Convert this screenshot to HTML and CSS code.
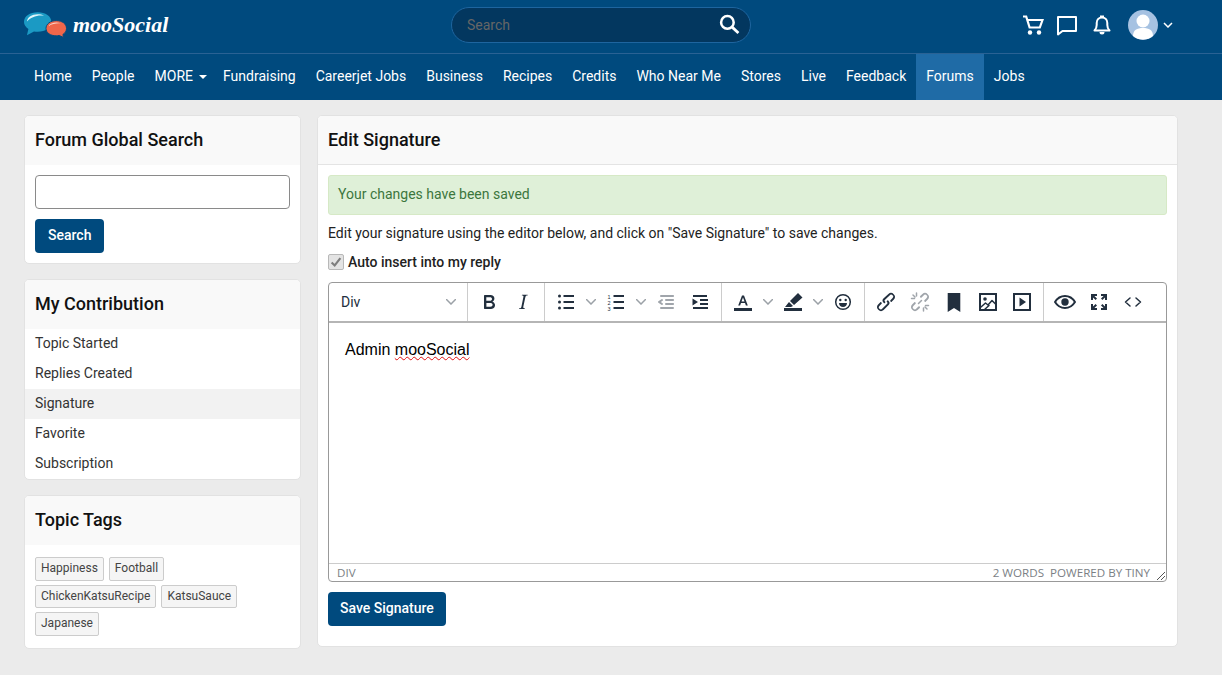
FILE: index.html
```html
<!DOCTYPE html>
<html lang="en">
<head>
    <meta charset="UTF-8">
    <meta name="viewport" content="width=device-width, initial-scale=1.0">
    <title>Edit Signature</title>
    <link rel="stylesheet" href="styles.css">
</head>
<body>
    <header class="topbar">
        <a class="logo" href="#">
            <svg class="logo-mark" viewBox="0 0 44 26">
                <path d="M14 0c8 0 14 4 14 10s-6 10-14 10c-1.300 0-2.600-.1-3.800-.4L3 23.500l1.500-6.300C1.700 15.300 0 12.800 0 10 0 4 6 0 14 0z" fill="#1b9ac4"/>
                <path d="M3 9.500C3.500 5 8 2 14 2c2.500 0 4.500.4 6.500 1.400C13 2.500 7 5 3 9.500z" fill="#dff5fb"/>
                <path d="M33 8.500c6 0 10.500 3.400 10.500 8 0 2.600-1.400 4.800-3.700 6.200l.7 3-4.500-2c-1 .3-2 .4-3 .4-6 0-10.500-3.200-10.500-7.600s4.500-8 10.500-8z" fill="#f0664a" stroke="#004a7e" stroke-width="1"/>
                <path d="M25 14c1.500-2 4.500-3.500 8-3.500 1.500 0 3 .2 4.500.8-4.500-.3-8.500.5-12.500 2.700z" fill="#fbd3c8"/>
            </svg>
            <span class="logo-text">mooSocial</span>
        </a>
        <form class="top-search">
            <span class="top-search-label">Search</span>
            <svg class="top-search-icon" viewBox="0 0 20 20"><circle cx="8" cy="8" r="6" fill="none" stroke="#fff" stroke-width="2.400"/><path d="M12.500 12.500l6 5.500" stroke="#fff" stroke-width="2.600" fill="none"/></svg>
        </form>
        <div class="top-icons">
            <svg class="top-icon" viewBox="0 0 22 22"><path d="M1 2.500h3.200l3.400 11h10.200L20.500 6H5.400" fill="none" stroke="#fff" stroke-width="2.200"/><circle cx="8" cy="18.500" r="2.200" fill="#fff"/><circle cx="17" cy="18.500" r="2.200" fill="#fff"/></svg>
            <svg class="top-icon" viewBox="0 0 22 22"><path d="M2 3h18v14H6.500L2 20.500z" fill="none" stroke="#fff" stroke-width="2" stroke-linejoin="round"/></svg>
            <svg class="top-icon bell" viewBox="0 0 22 22"><path d="M3.500 16.500c1.500-1.500 2.200-3 2.200-5.500V9c0-3.200 2.300-5.500 5.300-5.500s5.300 2.300 5.300 5.500v2c0 2.500.7 4 2.200 5.500z" fill="none" stroke="#fff" stroke-width="2" stroke-linejoin="round"/><path d="M9 1.500h4v2H9zM8.500 18h5a2.500 2.500 0 0 1-5 0z" fill="#fff"/></svg>
            <span class="avatar">
                <svg viewBox="0 0 30 30"><circle cx="15" cy="15" r="15" fill="#a6c2e2"/><circle cx="15" cy="11" r="6.500" fill="#fff"/><path d="M5 26c0-6 4-8 10-8s10 2 10 8c-3 2.500-6 3.500-10 3.500S8 28.500 5 26z" fill="#fff"/></svg>
            </span>
            <svg class="avatar-caret" viewBox="0 0 10 6"><path d="M1 1l4 4 4-4" fill="none" stroke="#fff" stroke-width="1.500"/></svg>
        </div>
    </header>

    <nav class="mainnav">
        <a href="#">Home</a>
        <a href="#">People</a>
        <a href="#" class="has-caret">MORE<span class="caret"></span></a>
        <a href="#">Fundraising</a>
        <a href="#">Careerjet Jobs</a>
        <a href="#">Business</a>
        <a href="#">Recipes</a>
        <a href="#">Credits</a>
        <a href="#">Who Near Me</a>
        <a href="#">Stores</a>
        <a href="#">Live</a>
        <a href="#">Feedback</a>
        <a href="#" class="active">Forums</a>
        <a href="#">Jobs</a>
    </nav>

    <div class="page">
        <aside class="sidebar">
            <section class="card">
                <h2 class="card-title">Forum Global Search</h2>
                <div class="search-body">
                    <input class="text-input" type="text">
                    <button class="btn" type="button">Search</button>
                </div>
            </section>
            <section class="card">
                <h2 class="card-title">My Contribution</h2>
                <ul class="side-menu">
                    <li>Topic Started</li>
                    <li>Replies Created</li>
                    <li class="current">Signature</li>
                    <li>Favorite</li>
                    <li>Subscription</li>
                </ul>
            </section>
            <section class="card">
                <h2 class="card-title">Topic Tags</h2>
                <div class="tags">
                    <a class="tag" href="#">Happiness</a>
                    <a class="tag" href="#">Football</a>
                    <a class="tag" href="#">ChickenKatsuRecipe</a>
                    <a class="tag" href="#">KatsuSauce</a>
                    <a class="tag" href="#">Japanese</a>
                </div>
            </section>
        </aside>

        <main class="card main-card">
            <h1 class="card-title bordered">Edit Signature</h1>
            <div class="main-body">
                <div class="alert">Your changes have been saved</div>
                <p class="hint">Edit your signature using the editor below, and click on "Save Signature" to save changes.</p>
                <label class="auto-insert">
                    <span class="check-box"><svg viewBox="0 0 16 16"><path d="M3 8.500l3.500 3.500L13 3.500" fill="none" stroke="#7d7d7d" stroke-width="2.400"/></svg></span>
                    Auto insert into my reply
                </label>

                <div class="editor">
                    <div class="toolbar">
                        <div class="tb-group tb-select">
                            <span>Div</span>
                            <svg class="chev" viewBox="0 0 10 6"><path d="M0 0l5 5 5-5" /></svg>
                        </div>
                        <div class="tb-group">
                            <button class="tb-btn" type="button"><svg viewBox="0 0 24 24"><path d="M7.800 19c-.3 0-.5 0-.6-.2l-.2-.5V5.700c0-.2 0-.4.2-.5l.6-.2h5c1.500 0 2.700.3 3.500 1 .7.600 1.100 1.400 1.100 2.500a3 3 0 0 1-.6 1.900c-.4.600-1 1-1.600 1.200.4.100.9.300 1.300.6s.8.700 1 1.200c.4.400.5 1 .5 1.600 0 1.300-.4 2.300-1.300 3-.8.700-2.100 1-3.800 1H7.800zm5-8.300c.6 0 1.200-.1 1.600-.5.400-.3.600-.7.600-1.300 0-1.100-.8-1.700-2.300-1.700H9.300v3.500h3.400zm.5 6c.7 0 1.300-.1 1.700-.4.400-.4.600-.9.600-1.500s-.2-1-.7-1.400c-.4-.3-1-.4-2-.4H9.400v3.800h4z"/></svg></button>
                            <button class="tb-btn" type="button"><svg viewBox="0 0 24 24"><path d="M16.700 4.700l-.1.900h-.3c-.6 0-1 0-1.400.3-.3.3-.4.600-.5 1.100l-2.100 9.800v.6c0 .5.400.8 1.400.8h.2l-.2.800H8l.2-.8h.2c1.100 0 1.800-.5 2-1.500l2-9.800.1-.5c0-.6-.4-.8-1.400-.8h-.3l.2-.9h5.800z"/></svg></button>
                        </div>
                        <div class="tb-group">
                            <button class="tb-btn split" type="button">
                                <svg viewBox="0 0 24 24"><path d="M9.500 5h10.500v2H9.500zM9.500 11h10.500v2H9.500zM9.500 17h10.500v2H9.500z"/><circle cx="5.500" cy="6" r="1.500"/><circle cx="5.500" cy="12" r="1.500"/><circle cx="5.500" cy="18" r="1.500"/></svg>
                                <svg class="chev" viewBox="0 0 10 6"><path d="M0 0l5 5 5-5" /></svg>
                            </button>
                            <button class="tb-btn split" type="button">
                                <svg viewBox="0 0 24 24"><path d="M9.500 5h10.500v2H9.500zM9.500 11h10.500v2H9.500zM9.500 17h10.500v2H9.500z"/><text class="digit" x="3.600" y="8.500">1</text><text class="digit" x="3.600" y="14.500">2</text><text class="digit" x="3.600" y="20.500">3</text></svg>
                                <svg class="chev" viewBox="0 0 10 6"><path d="M0 0l5 5 5-5" /></svg>
                            </button>
                            <button class="tb-btn muted" type="button"><svg viewBox="0 0 24 24"><path d="M7 5h12c.6 0 1 .4 1 1s-.4 1-1 1H7a1 1 0 1 1 0-2zm5 4h7c.6 0 1 .4 1 1s-.4 1-1 1h-7a1 1 0 0 1 0-2zm0 4h7c.6 0 1 .4 1 1s-.4 1-1 1h-7a1 1 0 0 1 0-2zm-5 4h12a1 1 0 0 1 0 2H7a1 1 0 0 1 0-2zm1.600-3.800a1 1 0 0 1-1.200 1.600l-3-2a1 1 0 0 1 0-1.600l3-2a1 1 0 0 1 1.200 1.600L6.800 12l1.800 1.200z"/></svg></button>
                            <button class="tb-btn" type="button"><svg viewBox="0 0 24 24"><path d="M5 5h14v2H5zM12 9h8v2h-8zM12 13h8v2h-8zM5 17h15v2H5zM10 12L4.500 8.500v7z"/></svg></button>
                        </div>
                        <div class="tb-group">
                            <button class="tb-btn split" type="button">
                                <svg viewBox="0 0 24 24"><path d="M11 5.500h2l3.800 10h-1.900l-.9-2.500H10l-.9 2.500H7.200zm-.5 6h3L12 7.500z"/><path d="M3 18h18v3H3z"/></svg>
                                <svg class="chev" viewBox="0 0 10 6"><path d="M0 0l5 5 5-5" /></svg>
                            </button>
                            <button class="tb-btn split" type="button">
                                <svg viewBox="0 0 24 24"><path d="M17 3l4.500 4.500-8.500 7.500-4-4zM8 12l4 4-2 1H4z"/><path d="M3 18h18v3H3z"/></svg>
                                <svg class="chev" viewBox="0 0 10 6"><path d="M0 0l5 5 5-5" /></svg>
                            </button>
                            <button class="tb-btn" type="button"><svg viewBox="0 0 24 24"><circle cx="12" cy="12" r="7.300" class="line thin"/><circle cx="9.300" cy="10" r="1.200"/><circle cx="14.700" cy="10" r="1.200"/><path d="M8 13h8c0 2.500-1.800 4-4 4s-4-1.500-4-4z"/></svg></button>
                        </div>
                        <div class="tb-group">
                            <button class="tb-btn" type="button"><svg viewBox="0 0 24 24"><path d="M6.200 12.300a1 1 0 0 1 1.400 1.400l-2 2a2 2 0 1 0 2.800 2.800l4.800-4.800a1 1 0 0 0 0-1.400 1 1 0 1 1 1.400-1.300 2.900 2.900 0 0 1 0 4L9.600 20a3.900 3.900 0 0 1-5.500-5.500l2-2zm11.600-.6a1 1 0 0 1-1.400-1.400l2-2a2 2 0 1 0-2.800-2.800L10.800 9.900a1 1 0 0 0 0 1.400 1 1 0 1 1-1.400 1.300 2.900 2.900 0 0 1 0-4L14.400 4a3.900 3.900 0 0 1 5.500 5.500l-2 2z"/></svg></button>
                            <button class="tb-btn muted" type="button"><svg viewBox="0 0 24 24"><path d="M6.200 12.300a1 1 0 0 1 1.400 1.400l-2 2a2 2 0 1 0 2.800 2.800l2-2a1 1 0 0 1 1.400 1.400L9.600 20a3.900 3.900 0 0 1-5.500-5.500l2-2zm11.600-.6a1 1 0 0 1-1.400-1.400l2-2a2 2 0 1 0-2.800-2.800l-2 2a1 1 0 0 1-1.400-1.400L14.400 4a3.900 3.900 0 0 1 5.500 5.500l-2 2z"/><path class="line thin" d="M8.500 3v3M3.500 8.500h3M15.500 21v-3M20.500 15.500h-3M5 5l2 2M19 19l-2-2M10.500 13.500l3-3"/></svg></button>
                            <button class="tb-btn" type="button"><svg viewBox="0 0 24 24"><path d="M5.700 3h12.600v19l-6.300-4-6.300 4z"/></svg></button>
                            <button class="tb-btn" type="button"><svg viewBox="0 0 24 24"><path d="M3 3h18v18H3zm2 2v14h14V5z" fill-rule="evenodd"/><circle cx="9" cy="9" r="1.800"/><path class="line thin" d="M5 17l4.500-4 2.500 2 4-4.500 3.500 3.500M8 20l5-4.500"/></svg></button>
                            <button class="tb-btn" type="button"><svg viewBox="0 0 24 24"><path d="M3 3h18v18H3zm2 2v14h14V5z" fill-rule="evenodd"/><path d="M9.500 7.500l6.500 4.500-6.500 4.500z"/></svg></button>
                        </div>
                        <div class="tb-group">
                            <button class="tb-btn" type="button"><svg viewBox="0 0 24 24"><path class="line" d="M2 12c2.500-4 6-6 10-6s7.500 2 10 6c-2.500 4-6 6-10 6s-7.500-2-10-6z"/><circle cx="12" cy="12" r="3.700"/></svg></button>
                            <button class="tb-btn" type="button"><svg viewBox="0 0 24 24"><path d="M4 4h6v2H7.400L10 8.600 8.600 10 6 7.400V10H4zM20 4v6h-2V7.400L15.400 10 14 8.600 16.600 6H14V4zM4 20v-6h2v2.600L8.600 14 10 15.400 7.400 18H10v2zM20 20h-6v-2h2.600L14 15.400l1.400-1.400 2.600 2.600V14h2z"/></svg></button>
                            <button class="tb-btn" type="button"><svg viewBox="0 0 24 24"><path class="line thin" d="M9 8l-4.500 4L9 16M15 8l4.500 4-4.500 4"/></svg></button>
                        </div>
                    </div>
                    <div class="editor-area"><p>Admin <span class="misspelled">mooSocial</span></p></div>
                    <div class="statusbar">
                        <span>DIV</span>
                        <span class="status-right">2 WORDS&nbsp; POWERED BY TINY</span>
                        <svg class="grip" viewBox="0 0 10 10"><path d="M9 1L1 9M9 5L5 9" /></svg>
                    </div>
                </div>

                <button class="btn save-btn" type="button">Save Signature</button>
            </div>
        </main>
    </div>
</body>
</html>
```

FILE: styles.css
```css
* {
    box-sizing: border-box;
}
html, body {
    margin: 0;
    height: 100%;
}
body {
    background: #ebebeb;
    font-family: Roboto, Arial, sans-serif;
    font-size: 14px;
    color: #222;
    overflow: hidden;
}
a {
    color: inherit;
    text-decoration: none;
}
.topbar {
    display: flex;
    align-items: center;
    height: 54px;
    padding: 0 49px 4px 24px;
    background: #004a7e;
    border-bottom: 1px solid #2a6294;
}
.logo {
    display: flex;
    align-items: center;
    gap: 6px;
    width: 427px;
    flex: none;
}
.logo-mark {
    width: 43px;
    height: 26px;
}
.logo-text {
    font-family: "Liberation Serif", serif;
    font-style: italic;
    font-weight: bold;
    font-size: 22px;
    color: #fff;
}
.top-search {
    display: flex;
    align-items: center;
    justify-content: space-between;
    width: 300px;
    height: 36px;
    padding: 0 10px 0 15px;
    background: #03375f;
    border: 1px solid #1e659f;
    border-radius: 18px;
}
.top-search-label {
    color: #666;
}
.top-search-icon {
    width: 21px;
    height: 21px;
}
.top-icons {
    display: flex;
    align-items: center;
    margin-left: auto;
}
.top-icon {
    width: 22px;
    height: 22px;
    margin-right: 12px;
}
.top-icon.bell {
    margin: 0 15px 0 1px;
}
.avatar {
    display: flex;
    width: 30px;
    height: 30px;
}
.avatar-caret {
    width: 10px;
    height: 6px;
    margin-left: 5px;
}
.mainnav {
    display: flex;
    height: 46px;
    padding-left: 24px;
    background: #004a7e;
}
.mainnav a {
    display: flex;
    align-items: center;
    padding: 0 10px 2px;
    color: #fff;
}
.mainnav a.has-caret {
    padding-right: 6px;
}
.mainnav a.active {
    background: #1f6ba6;
}
.caret {
    width: 0;
    height: 0;
    margin: 2px 0 0 6px;
    border-left: 4.500px solid transparent;
    border-right: 4.500px solid transparent;
    border-top: 4.500px solid #fff;
}
.page {
    display: flex;
    align-items: flex-start;
    gap: 16px;
    padding: 15px 44px 0 24px;
}
.sidebar {
    display: flex;
    flex-direction: column;
    gap: 15px;
    width: 277px;
    flex: none;
}
.card {
    background: #fff;
    border: 1px solid #e2e2e2;
    border-radius: 5px;
    overflow: hidden;
}
.card-title {
    height: 49px;
    margin: 0;
    padding: 0 10px;
    background: #f9f9f9;
    font-size: 18px;
    font-weight: 500;
    line-height: 48px;
    color: #111;
}
.card-title.bordered {
    border-bottom: 1px solid #e4e4e4;
}
.search-body {
    display: flex;
    flex-direction: column;
    align-items: flex-start;
    gap: 10px;
    padding: 10px;
}
.text-input {
    width: 100%;
    height: 34px;
    border: 1px solid #8a8a8a;
    border-radius: 4px;
}
.btn {
    height: 34px;
    padding: 0 13px 2px;
    background: #004a7e;
    border: 0;
    border-radius: 4px;
    color: #fff;
    font-family: inherit;
    font-size: 14px;
    font-weight: 500;
}
.side-menu {
    list-style: none;
    margin: 0;
    padding: 0;
}
.side-menu li {
    height: 30px;
    padding: 0 10px;
    line-height: 28px;
    color: #333;
}
.side-menu li.current {
    background: #f2f2f2;
}
.tags {
    display: flex;
    flex-wrap: wrap;
    gap: 4px 5px;
    padding: 12px 10px;
}
.tag {
    height: 23.500px;
    padding: 0 5px;
    background: #f5f5f5;
    border: 1px solid #ccc;
    border-radius: 2px;
    font-size: 12px;
    line-height: 20px;
    color: #444;
}
.main-card {
    width: 861px;
    height: 532px;
    flex: none;
}
.main-body {
    padding: 10px;
}
.alert {
    height: 40px;
    padding: 0 9px;
    background: #dff0d8;
    border: 1px solid #d6e9c6;
    border-radius: 3px;
    line-height: 37px;
    color: #3c763d;
}
.hint {
    margin: 10px 0 0;
    line-height: 17px;
}
.auto-insert {
    display: flex;
    align-items: center;
    gap: 4px;
    height: 20px;
    margin-top: 10px;
    font-weight: 500;
}
.check-box {
    display: flex;
    width: 16px;
    height: 16px;
    background: #e3e3e3;
    border: 1px solid #b8b8b8;
    border-radius: 2px;
}
.editor {
    display: flex;
    flex-direction: column;
    height: 300px;
    margin-top: 10px;
    border: 1px solid #999;
    border-radius: 4px;
    overflow: hidden;
}
.toolbar {
    display: flex;
    flex: none;
    height: 40px;
    border-bottom: 2px solid #b5b5b5;
}
.tb-group {
    display: flex;
    align-items: center;
    padding: 0 4px;
    border-right: 1px solid #ccc;
}
.tb-group:last-child {
    border-right: 0;
}
.tb-select {
    justify-content: space-between;
    width: 139px;
    padding: 0 11px 0 12px;
    font-size: 14px;
    color: #222f3e;
}
.tb-btn {
    display: flex;
    align-items: center;
    justify-content: center;
    width: 34px;
    height: 34px;
    padding: 0;
    background: none;
    border: 0;
    fill: #222f3e;
}
.tb-btn svg {
    width: 24px;
    height: 24px;
    flex: none;
}
.tb-btn.split {
    justify-content: flex-start;
    width: 50px;
    padding-left: 5px;
}
.tb-btn.muted {
    fill: #a0a5ab;
}
.tb-btn .chev {
    width: 10px;
    height: 6px;
    margin-left: 8px;
}
.digit {
    font-family: "Liberation Sans", Arial, sans-serif;
    font-size: 5.500px;
}
.chev {
    width: 10px;
    height: 6px;
    fill: none;
    stroke: #9ba1a7;
    stroke-width: 1.500;
}
.line {
    fill: none;
    stroke: #222f3e;
    stroke-width: 2;
    stroke-linecap: round;
    stroke-linejoin: round;
}
.line.thin {
    stroke-width: 1.500;
}
.tb-btn.muted .line {
    stroke: #a0a5ab;
}
.editor-area {
    flex: 1;
    padding: 16px;
    font-family: "Liberation Sans", Arial, sans-serif;
    font-size: 16px;
    color: #000;
}
.editor-area p {
    margin: 0;
    line-height: 22px;
}
.misspelled {
    text-decoration: underline wavy #e01010;
    text-decoration-thickness: 1px;
}
.statusbar {
    display: flex;
    align-items: center;
    flex: none;
    height: 18px;
    padding: 0 0 0 8px;
    border-top: 1px solid #ccc;
    font-family: "Open Sans", Arial, sans-serif;
    font-size: 11.600px;
    color: #7b7f85;
}
.status-right {
    margin-left: auto;
    margin-right: 6px;
}
.grip {
    width: 10px;
    height: 10px;
    fill: none;
    stroke: #555;
    stroke-width: 1;
    align-self: flex-end;
}
.save-btn {
    margin-top: 10px;
    padding: 0 12px 2px;
}
```
